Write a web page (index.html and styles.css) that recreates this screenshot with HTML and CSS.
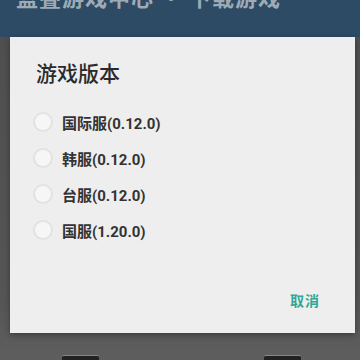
FILE: index.html
```html
<!DOCTYPE html>
<html lang="zh-CN">
<head>
    <meta charset="UTF-8">
    <meta name="viewport" content="width=device-width, initial-scale=1.0">
    <title>游戏版本</title>
    <link rel="stylesheet" href="styles.css">
</head>
<body>
    <div class="screen">
        <div class="topbar">
            <span class="topbar-title">蓝叠游戏中心 · 下载游戏</span>
        </div>
        <div class="backdrop">
            <div class="bottom-nav">
                <span class="nav-item"></span>
                <span class="nav-item"></span>
            </div>
        </div>

        <div class="dialog">
            <h1 class="dialog-title">游戏版本</h1>
            <form class="option-list" id="versionForm">
                <label class="option">
                    <input type="radio" name="version" value="intl">
                    <span class="radio"></span>
                    <span class="option-text">国际服(0.12.0)</span>
                </label>
                <label class="option">
                    <input type="radio" name="version" value="kr">
                    <span class="radio"></span>
                    <span class="option-text">韩服(0.12.0)</span>
                </label>
                <label class="option">
                    <input type="radio" name="version" value="tw">
                    <span class="radio"></span>
                    <span class="option-text">台服(0.12.0)</span>
                </label>
                <label class="option">
                    <input type="radio" name="version" value="cn">
                    <span class="radio"></span>
                    <span class="option-text">国服(1.20.0)</span>
                </label>
            </form>
            <div class="dialog-actions">
                <button type="button" class="btn-text">取消</button>
            </div>
        </div>
    </div>
</body>
</html>
```

FILE: styles.css
```css
* { margin: 0; padding: 0; box-sizing: border-box; }
body {
    font-family: "Noto Sans CJK SC", Roboto, "Liberation Sans", sans-serif;
    background: #565656;
    width: 360px; height: 360px; overflow: hidden;
}
.screen {
    position: relative; width: 360px; height: 360px;
    display: flex; flex-direction: column;
}
.topbar {
    height: 37px; background: #2d4b65; overflow: hidden;
    padding-left: 16px;
}
.topbar-title {
    display: block; margin-top: -16px;
    font-size: 22px; line-height: 24px; font-weight: 700;
    color: #9eabb6; letter-spacing: 1px;
}
.backdrop {
    flex: 1; background: linear-gradient(#4f4f4f 0%, #555 80%, #5e5e5e 100%);
    display: flex; flex-direction: column; justify-content: flex-end;
}
.bottom-nav {
    height: 5px; display: flex; padding-left: 62px; gap: 165px;
}
.nav-item {
    width: 37px; height: 5px; background: #222;
    border-top: 1px solid #888; border-radius: 2px 2px 0 0;
}

/* modal */
.dialog {
    position: absolute; top: 37px; left: 10px;
    width: 345px; height: 296px;
    background: #eeeeee;
    box-shadow: 0 2px 6px rgba(0,0,0,0.35);
    padding: 21px 24px 15px 23px;
    display: flex; flex-direction: column;
}
.dialog-title {
    font-size: 21px; line-height: 28px; font-weight: 500;
    color: #2a2a2a; margin-left: 3px;
}
.option-list { margin-top: 18px; }
.option {
    display: flex; align-items: center; height: 36px;
    cursor: pointer;
}
.option input { display: none; }
.radio {
    width: 20px; height: 20px; border-radius: 50%;
    border: 2px solid #e2e2e2; background: #f6f6f6;
    margin-right: 9px;
}
.option input:checked + .radio { border-color: #2fa898; box-shadow: inset 0 0 0 3px #f6f6f6; background: #2fa898; }
.option-text {
    font-size: 15px; font-weight: 700; color: #333;
    font-family: Roboto, "Noto Sans CJK SC", sans-serif;
}
.dialog-actions {
    margin-top: auto; display: flex; justify-content: flex-end;
    padding-right: 11px;
}
.btn-text {
    border: none; background: none; cursor: pointer;
    font-family: "Noto Sans CJK SC", sans-serif;
    font-size: 14px; line-height: 36px; font-weight: 700;
    color: #2fa898; letter-spacing: 1px;
}
```
